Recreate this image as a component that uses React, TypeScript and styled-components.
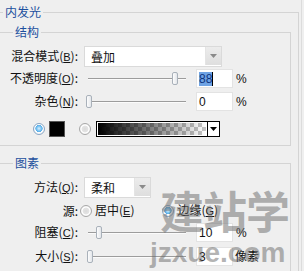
import React from "react";
import styled, { createGlobalStyle } from "styled-components";

const GlobalStyle = createGlobalStyle`
  html, body {
    margin: 0;
    padding: 0;
    background: #efefef;
  }
  body {
    font-family: "Noto Sans CJK SC", "Liberation Sans", sans-serif;
    font-size: 12px;
    color: #111;
  }
`;

const Panel = styled.div`
  position: relative;
  width: 302px;
  height: 271px;
  box-sizing: border-box;
  padding-top: 5px;
  overflow: hidden;
  background: #efefef;
  border-right: 1px solid #dcdcdc;
`;

/* group boxes */
const Group = styled.fieldset<{ $outer?: boolean; $mt?: number }>`
  margin: ${(p) => p.$mt ?? 0}px 0 0 0;
  padding: ${(p) => (p.$outer ? "6px 7px 0 0" : "7px 0 8px 0")};
  width: ${(p) => (p.$outer ? "299px" : "auto")};
  box-sizing: border-box;
  min-width: 0;
  border: 1px solid #d4d4d4;
  border-left: none;
  ${(p) => (p.$outer ? "border-bottom: none;" : "")}
`;

const Title = styled.legend<{ $outer?: boolean }>`
  margin-left: ${(p) => (p.$outer ? 3 : 13)}px;
  padding: 0 2px;
  line-height: 14px;
  font-size: 12px;
  color: #1d4f9e;
`;

/* rows */
const Row = styled.div<{ $h?: number; $mt?: number; $gap?: number; $pl?: number }>`
  display: flex;
  align-items: center;
  height: ${(p) => p.$h ?? 21}px;
  margin-top: ${(p) => p.$mt ?? 0}px;
  padding-left: ${(p) => p.$pl ?? 0}px;
  gap: ${(p) => p.$gap ?? 6}px;
`;

const Label = styled.div`
  width: 78px;
  flex: none;
  text-align: right;
  white-space: nowrap;
  line-height: 16px;
`;

const Key = styled.u`
  font-family: "Liberation Sans", sans-serif;
  font-size: 11px;
`;

const Unit = styled.span<{ $ml?: number }>`
  margin-left: ${(p) => p.$ml ?? -3}px;
  font-family: "Liberation Sans", "Noto Sans CJK SC", sans-serif;
  line-height: 16px;
`;

/* combo box */
const Combo = styled.div<{ $w: number }>`
  display: flex;
  width: ${(p) => p.$w}px;
  height: 21px;
  box-sizing: border-box;
  border: 1px solid #dadada;
  background: #fff;
`;

const ComboText = styled.div`
  flex: 1;
  padding-left: 6px;
  line-height: 19px;
`;

const ComboArrow = styled.div`
  display: flex;
  align-items: center;
  justify-content: center;
  width: 15px;
  margin: 0 0 1px;
  background: linear-gradient(#ececec, #dedede);
  border-left: 1px solid #e4e4e4;
`;

/* slider */
const Slider = styled.div`
  position: relative;
  display: flex;
  align-items: center;
  width: 106px;
  height: 100%;
  padding: 0 4px 0 4px;
  box-sizing: border-box;
`;

const Track = styled.div`
  flex: 1;
  height: 1px;
  border-bottom: 1px solid #fbfbfb;
  background: #9c9c9c;
`;

const Thumb = styled.div`
  position: absolute;
  top: 4px;
  width: 6px;
  height: 13px;
  box-sizing: border-box;
  border: 1px solid #a9b1ba;
  border-radius: 2px;
  background: linear-gradient(to right, #fdfdfd, #e3e6ea);
`;

/* text field */
const Field = styled.div`
  display: flex;
  align-items: center;
  width: 37px;
  height: 19px;
  box-sizing: border-box;
  padding-left: 2px;
  border: 1px solid #e3e3e3;
  background: #fff;
  font-family: "Liberation Sans", sans-serif;
  font-size: 12px;
`;

const Selected = styled.span`
  background: #6fa3e4;
  color: #10357f;
  line-height: 14px;
`;

const Caret = styled.span`
  display: inline-block;
  width: 1px;
  height: 14px;
  background: #000;
`;

/* radios and swatches */
const Radio = styled.span<{ $on?: boolean }>`
  display: inline-block;
  flex: none;
  width: 12px;
  height: 12px;
  box-sizing: border-box;
  border-radius: 50%;
  border: 1px solid ${(p) => (p.$on ? "#8aa6c4" : "#a8a8a8")};
  background: ${(p) =>
    p.$on
      ? "radial-gradient(circle at 50% 45%, #d8f0ff 0, #6fbdf0 2.6px, #5aaee6 3.4px, #fff 3.9px, #e9eef2 6px)"
      : "radial-gradient(circle at 50% 50%, #dadada 0, #e4e4e4 3px, #fff 3.8px, #ececec 6px)"};
`;

const Option = styled.div<{ $ml?: number }>`
  display: flex;
  align-items: center;
  gap: 3px;
  margin-left: ${(p) => p.$ml ?? 0}px;
  white-space: nowrap;
  line-height: 16px;
`;

const Swatch = styled.div`
  width: 16px;
  height: 16px;
  box-sizing: border-box;
  border: 1px solid #555;
  background: #000;
  margin-left: -1px;
  margin-right: 9px;
`;

const GradientBox = styled.div`
  display: flex;
  width: 124px;
  height: 16px;
  box-sizing: border-box;
  border: 1px solid #000;
`;

const GradientFill = styled.div`
  flex: 1;
  border: 1px solid #fff;
  background: linear-gradient(to right, #000 0%, rgba(0, 0, 0, 0) 100%),
    conic-gradient(#c4c4c4 25%, #fff 0 50%, #c4c4c4 0 75%, #fff 0) 0 0 / 8px 8px;
`;

const GradientArrow = styled.div`
  display: flex;
  align-items: center;
  justify-content: center;
  width: 11px;
  border-left: 1px solid #000;
  background: #fff;
`;

/* watermark over the lower right */
const Watermark = styled.div`
  position: absolute;
  left: 150px;
  top: 188px;
  pointer-events: none;
  color: rgba(105, 105, 105, 0.5);
  font-weight: bold;
`;

const MarkCn = styled.div`
  margin-left: 10px;
  font-family: "Noto Sans CJK SC", sans-serif;
  font-size: 44px;
  line-height: 44px;
  letter-spacing: -1px;
`;

const MarkEn = styled.div`
  margin-top: 7px;
  font-family: "Liberation Sans", sans-serif;
  font-size: 28px;
  line-height: 28px;
`;

const Arrow = ({ color }: { color: string }) => (
  <svg width="7" height="4" viewBox="0 0 7 4">
    <path d="M0 0h7L3.5 4z" fill={color} />
  </svg>
);

const ComboBox = ({ value, width }: { value: string; width: number }) => (
  <Combo $w={width}>
    <ComboText>{value}</ComboText>
    <ComboArrow>
      <Arrow color="#8a8a8a" />
    </ComboArrow>
  </Combo>
);

const SliderControl = ({ pct }: { pct: number }) => (
  <Slider>
    <Track />
    <Thumb style={{ left: `${2 + pct * 0.98}px` }} />
  </Slider>
);

export default function App() {
  return (
    <>
      <GlobalStyle />
      <Panel>
        <Group $outer>
          <Title $outer>内发光</Title>

          <Group>
            <Title>结构</Title>
            <Row>
              <Label>
                混合模式(<Key>B</Key>):
              </Label>
              <ComboBox value="叠加" width={138} />
            </Row>
            <Row $mt={1}>
              <Label>
                不透明度(<Key>O</Key>):
              </Label>
              <SliderControl pct={88} />
              <Field>
                <Selected>88</Selected>
                <Caret />
              </Field>
              <Unit>%</Unit>
            </Row>
            <Row $mt={2}>
              <Label>
                杂色(<Key>N</Key>):
              </Label>
              <SliderControl pct={0} />
              <Field>0</Field>
              <Unit>%</Unit>
            </Row>
            <Row $h={16} $mt={9} $pl={33} $gap={5}>
              <Radio $on />
              <Swatch />
              <Radio />
              <GradientBox>
                <GradientFill />
                <GradientArrow>
                  <Arrow color="#000" />
                </GradientArrow>
              </GradientBox>
            </Row>
          </Group>

          <Group $mt={10}>
            <Title>图素</Title>
            <Row>
              <Label>
                方法(<Key>Q</Key>):
              </Label>
              <ComboBox value="柔和" width={67} />
            </Row>
            <Row $mt={2} $gap={2}>
              <Label>源:</Label>
              <Option>
                <Radio />
                <span>
                  居中(<Key>E</Key>)
                </span>
              </Option>
              <Option $ml={26}>
                <Radio $on />
                <span>
                  边缘(<Key>G</Key>)
                </span>
              </Option>
            </Row>
            <Row $mt={1}>
              <Label>
                阻塞(<Key>C</Key>):
              </Label>
              <SliderControl pct={10} />
              <Field>10</Field>
              <Unit>%</Unit>
            </Row>
            <Row $mt={3}>
              <Label>
                大小(<Key>S</Key>):
              </Label>
              <SliderControl pct={1} />
              <Field>3</Field>
              <Unit $ml={-4}>像素</Unit>
            </Row>
          </Group>
        </Group>

        <Watermark>
          <MarkCn>建站学</MarkCn>
          <MarkEn>jzxue.com</MarkEn>
        </Watermark>
      </Panel>
    </>
  );
}
